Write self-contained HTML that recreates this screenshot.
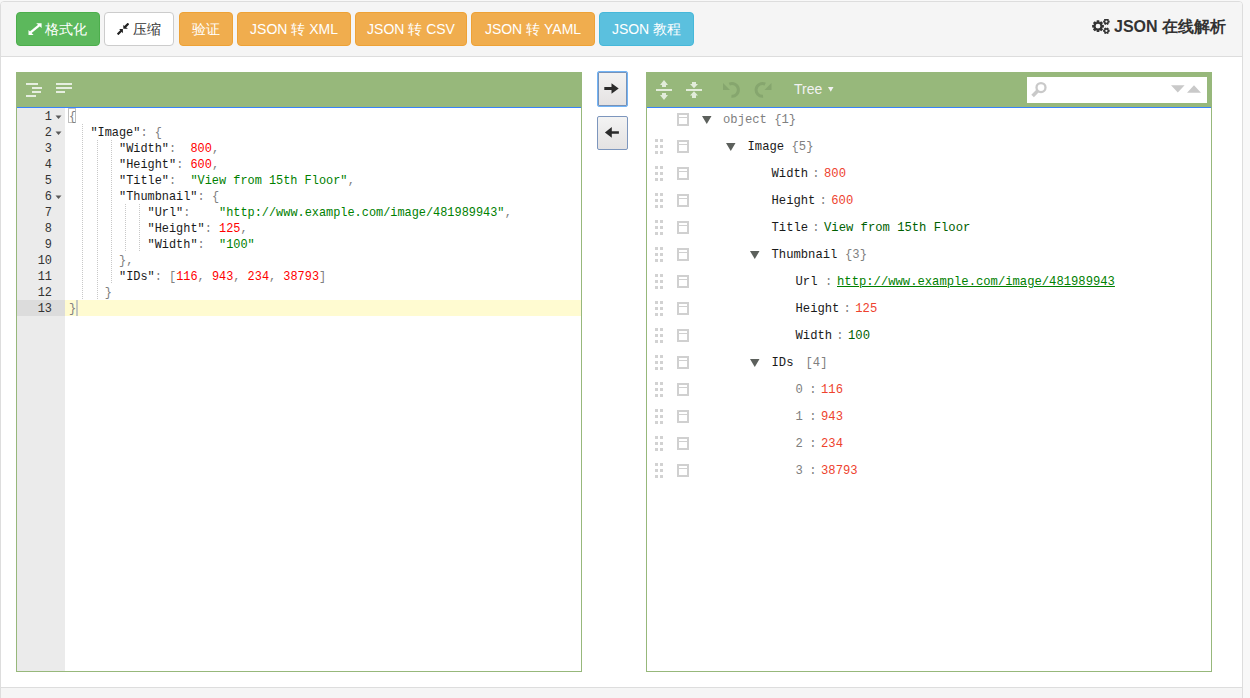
<!DOCTYPE html><html><head><meta charset="utf-8"><style>
*{box-sizing:border-box}
html,body{margin:0;padding:0}
body{width:1250px;height:698px;overflow:hidden;position:relative;background:#f8f8f8;font-family:"Liberation Sans",sans-serif;color:#333}
div,span,svg{position:absolute}
.panel{left:0;top:1px;width:1243px;height:760px;border:1px solid #ddd;border-radius:4px;background:#fff;overflow:hidden}
.ph{left:0;top:0;width:1241px;height:55px;background:#f5f5f5;border-bottom:1px solid #ddd}
.pf{left:0;top:685px;width:1241px;height:60px;background:#f5f5f5;border-top:1px solid #ddd}
.btn{top:12px;height:34px;border:1px solid;border-radius:4px;font-size:14px;line-height:32px;color:#fff;white-space:nowrap}
.btn span{position:static}
.g{background:#5cb85c;border-color:#4cae4c}
.d{background:#fff;border-color:#ccc;color:#333}
.o{background:#f0ad4e;border-color:#eea236}
.b{background:#5bc0de;border-color:#46b8da}
.t{white-space:pre}
.title{font-size:16px;font-weight:bold;color:#333;white-space:nowrap}
.ed{top:72px;height:600px;border:1px solid #97b87b;background:#fff}
.menu{left:0;top:0;width:564px;height:35px;background:#97b87b;border-bottom:1px solid #3883fa}
.gut{left:0;top:35px;width:48px;height:563px;background:#ebebeb}
.cm{font-family:"Liberation Mono",monospace;font-size:11.9px;white-space:pre;height:16px;line-height:16px;color:gray}
.ln{color:#333;text-align:right;width:40px}
.v{color:#1a1a1a}.s{color:green}.n{color:red}
.tm{font-family:"Liberation Mono",monospace;font-size:12.2px;white-space:pre;height:16px;line-height:16px}
.f{color:#1a1a1a}.ro{color:#808080}.sep{color:#808080}.num{color:#ee422e}.str{color:#006000}.url{color:green;text-decoration:underline}
</style></head><body>
<div class="panel"><div class="ph"></div><div class="pf"></div></div>
<div class="btn g" style="left:16px;width:84px;text-align:center;padding-left:16px">格式化</div>
<svg style="left:28px;top:23px" width="14" height="12" viewBox="0 0 14 12"><path d="M8.2 0.2 L13.6 0.2 L13.6 5 Z M0.5 7 L0.5 12 L5.6 12 Z" fill="#fff"/><path d="M2.6 9.4 L11.2 2.4" stroke="#fff" stroke-width="2.4"/></svg>
<div class="btn d" style="left:104px;width:70px;text-align:center;padding-left:16px">压缩</div>
<svg style="left:117px;top:23px" width="12" height="12" viewBox="0 0 12 12"><path d="M6.3 1.9 L6.3 5.8 L10.9 5.8 Z M2.2 6.1 L5.9 6.1 L5.9 10.2 Z" fill="#222"/><path d="M11.5 0.5 L7.6 4.4 M0.6 11.4 L4.5 7.5" stroke="#222" stroke-width="2.2"/></svg>
<div class="btn o" style="left:179px;width:54px;text-align:center;padding-left:0px">验证</div>
<div class="btn o" style="left:237px;width:114px;text-align:center;padding-left:0px">JSON 转 XML</div>
<div class="btn o" style="left:355px;width:112px;text-align:center;padding-left:0px">JSON 转 CSV</div>
<div class="btn o" style="left:471px;width:124px;text-align:center;padding-left:0px">JSON 转 YAML</div>
<div class="btn b" style="left:599px;width:95px;text-align:center;padding-left:0px">JSON 教程</div>
<div class="title" style="left:1114px;top:16px;line-height:22px">JSON 在线解析</div>
<div class="ed" style="left:16px;width:566px"><div class="menu"></div><div class="gut"></div></div>
<div class="ed" style="left:646px;width:566px"><div class="menu"></div></div>
<div style="left:65px;top:300px;width:516px;height:16px;background:#fffbd1"></div>
<div style="left:17px;top:300px;width:48px;height:16px;background:#dcdcdc"></div>
<div style="left:82px;top:124px;width:1px;height:16px;background:repeating-linear-gradient(#c8c8c8 0 1px,transparent 1px 2px)"></div>
<div style="left:82px;top:140px;width:1px;height:16px;background:repeating-linear-gradient(#c8c8c8 0 1px,transparent 1px 2px)"></div>
<div style="left:97px;top:140px;width:1px;height:16px;background:repeating-linear-gradient(#c8c8c8 0 1px,transparent 1px 2px)"></div>
<div style="left:111px;top:140px;width:1px;height:16px;background:repeating-linear-gradient(#c8c8c8 0 1px,transparent 1px 2px)"></div>
<div style="left:82px;top:156px;width:1px;height:16px;background:repeating-linear-gradient(#c8c8c8 0 1px,transparent 1px 2px)"></div>
<div style="left:97px;top:156px;width:1px;height:16px;background:repeating-linear-gradient(#c8c8c8 0 1px,transparent 1px 2px)"></div>
<div style="left:111px;top:156px;width:1px;height:16px;background:repeating-linear-gradient(#c8c8c8 0 1px,transparent 1px 2px)"></div>
<div style="left:82px;top:172px;width:1px;height:16px;background:repeating-linear-gradient(#c8c8c8 0 1px,transparent 1px 2px)"></div>
<div style="left:97px;top:172px;width:1px;height:16px;background:repeating-linear-gradient(#c8c8c8 0 1px,transparent 1px 2px)"></div>
<div style="left:111px;top:172px;width:1px;height:16px;background:repeating-linear-gradient(#c8c8c8 0 1px,transparent 1px 2px)"></div>
<div style="left:82px;top:188px;width:1px;height:16px;background:repeating-linear-gradient(#c8c8c8 0 1px,transparent 1px 2px)"></div>
<div style="left:97px;top:188px;width:1px;height:16px;background:repeating-linear-gradient(#c8c8c8 0 1px,transparent 1px 2px)"></div>
<div style="left:111px;top:188px;width:1px;height:16px;background:repeating-linear-gradient(#c8c8c8 0 1px,transparent 1px 2px)"></div>
<div style="left:82px;top:204px;width:1px;height:16px;background:repeating-linear-gradient(#c8c8c8 0 1px,transparent 1px 2px)"></div>
<div style="left:97px;top:204px;width:1px;height:16px;background:repeating-linear-gradient(#c8c8c8 0 1px,transparent 1px 2px)"></div>
<div style="left:111px;top:204px;width:1px;height:16px;background:repeating-linear-gradient(#c8c8c8 0 1px,transparent 1px 2px)"></div>
<div style="left:125px;top:204px;width:1px;height:16px;background:repeating-linear-gradient(#c8c8c8 0 1px,transparent 1px 2px)"></div>
<div style="left:139px;top:204px;width:1px;height:16px;background:repeating-linear-gradient(#c8c8c8 0 1px,transparent 1px 2px)"></div>
<div style="left:82px;top:220px;width:1px;height:16px;background:repeating-linear-gradient(#c8c8c8 0 1px,transparent 1px 2px)"></div>
<div style="left:97px;top:220px;width:1px;height:16px;background:repeating-linear-gradient(#c8c8c8 0 1px,transparent 1px 2px)"></div>
<div style="left:111px;top:220px;width:1px;height:16px;background:repeating-linear-gradient(#c8c8c8 0 1px,transparent 1px 2px)"></div>
<div style="left:125px;top:220px;width:1px;height:16px;background:repeating-linear-gradient(#c8c8c8 0 1px,transparent 1px 2px)"></div>
<div style="left:139px;top:220px;width:1px;height:16px;background:repeating-linear-gradient(#c8c8c8 0 1px,transparent 1px 2px)"></div>
<div style="left:82px;top:236px;width:1px;height:16px;background:repeating-linear-gradient(#c8c8c8 0 1px,transparent 1px 2px)"></div>
<div style="left:97px;top:236px;width:1px;height:16px;background:repeating-linear-gradient(#c8c8c8 0 1px,transparent 1px 2px)"></div>
<div style="left:111px;top:236px;width:1px;height:16px;background:repeating-linear-gradient(#c8c8c8 0 1px,transparent 1px 2px)"></div>
<div style="left:125px;top:236px;width:1px;height:16px;background:repeating-linear-gradient(#c8c8c8 0 1px,transparent 1px 2px)"></div>
<div style="left:139px;top:236px;width:1px;height:16px;background:repeating-linear-gradient(#c8c8c8 0 1px,transparent 1px 2px)"></div>
<div style="left:82px;top:252px;width:1px;height:16px;background:repeating-linear-gradient(#c8c8c8 0 1px,transparent 1px 2px)"></div>
<div style="left:97px;top:252px;width:1px;height:16px;background:repeating-linear-gradient(#c8c8c8 0 1px,transparent 1px 2px)"></div>
<div style="left:111px;top:252px;width:1px;height:16px;background:repeating-linear-gradient(#c8c8c8 0 1px,transparent 1px 2px)"></div>
<div style="left:82px;top:268px;width:1px;height:16px;background:repeating-linear-gradient(#c8c8c8 0 1px,transparent 1px 2px)"></div>
<div style="left:97px;top:268px;width:1px;height:16px;background:repeating-linear-gradient(#c8c8c8 0 1px,transparent 1px 2px)"></div>
<div style="left:111px;top:268px;width:1px;height:16px;background:repeating-linear-gradient(#c8c8c8 0 1px,transparent 1px 2px)"></div>
<div style="left:82px;top:284px;width:1px;height:16px;background:repeating-linear-gradient(#c8c8c8 0 1px,transparent 1px 2px)"></div>
<div style="left:97px;top:284px;width:1px;height:16px;background:repeating-linear-gradient(#c8c8c8 0 1px,transparent 1px 2px)"></div>
<div style="left:68px;top:108px;width:8px;height:15px;border:1px solid #bfbfbf"></div>
<div style="left:76px;top:300px;width:2px;height:16px;background:#c3c8c3"></div>
<div class="cm ln" style="left:12px;top:109px">1</div>
<div class="cm " style="left:69.00px;top:109px">{</div>
<div class="cm ln" style="left:12px;top:125px">2</div>
<div class="cm v" style="left:90.44px;top:125px">&quot;Image&quot;</div>
<div class="cm " style="left:140.45px;top:125px">: {</div>
<div class="cm ln" style="left:12px;top:141px">3</div>
<div class="cm v" style="left:119.02px;top:141px">&quot;Width&quot;</div>
<div class="cm " style="left:169.03px;top:141px">:  </div>
<div class="cm n" style="left:190.46px;top:141px">800</div>
<div class="cm " style="left:211.90px;top:141px">,</div>
<div class="cm ln" style="left:12px;top:157px">4</div>
<div class="cm v" style="left:119.02px;top:157px">&quot;Height&quot;</div>
<div class="cm " style="left:176.18px;top:157px">: </div>
<div class="cm n" style="left:190.46px;top:157px">600</div>
<div class="cm " style="left:211.90px;top:157px">,</div>
<div class="cm ln" style="left:12px;top:173px">5</div>
<div class="cm v" style="left:119.02px;top:173px">&quot;Title&quot;</div>
<div class="cm " style="left:169.03px;top:173px">:  </div>
<div class="cm s" style="left:190.46px;top:173px">&quot;View from 15th Floor&quot;</div>
<div class="cm " style="left:347.65px;top:173px">,</div>
<div class="cm ln" style="left:12px;top:189px">6</div>
<div class="cm v" style="left:119.02px;top:189px">&quot;Thumbnail&quot;</div>
<div class="cm " style="left:197.61px;top:189px">: {</div>
<div class="cm ln" style="left:12px;top:205px">7</div>
<div class="cm v" style="left:147.59px;top:205px">&quot;Url&quot;</div>
<div class="cm " style="left:183.32px;top:205px">:    </div>
<div class="cm s" style="left:219.04px;top:205px">&quot;http://www.example.com/image/481989943&quot;</div>
<div class="cm " style="left:504.84px;top:205px">,</div>
<div class="cm ln" style="left:12px;top:221px">8</div>
<div class="cm v" style="left:147.59px;top:221px">&quot;Height&quot;</div>
<div class="cm " style="left:204.75px;top:221px">: </div>
<div class="cm n" style="left:219.04px;top:221px">125</div>
<div class="cm " style="left:240.48px;top:221px">,</div>
<div class="cm ln" style="left:12px;top:237px">9</div>
<div class="cm v" style="left:147.59px;top:237px">&quot;Width&quot;</div>
<div class="cm " style="left:197.61px;top:237px">:  </div>
<div class="cm s" style="left:219.04px;top:237px">&quot;100&quot;</div>
<div class="cm ln" style="left:12px;top:253px">10</div>
<div class="cm " style="left:119.02px;top:253px">},</div>
<div class="cm ln" style="left:12px;top:269px">11</div>
<div class="cm v" style="left:119.02px;top:269px">&quot;IDs&quot;</div>
<div class="cm " style="left:154.74px;top:269px">: [</div>
<div class="cm n" style="left:176.18px;top:269px">116</div>
<div class="cm " style="left:197.61px;top:269px">, </div>
<div class="cm n" style="left:211.90px;top:269px">943</div>
<div class="cm " style="left:233.33px;top:269px">, </div>
<div class="cm n" style="left:247.62px;top:269px">234</div>
<div class="cm " style="left:269.06px;top:269px">, </div>
<div class="cm n" style="left:283.35px;top:269px">38793</div>
<div class="cm " style="left:319.07px;top:269px">]</div>
<div class="cm ln" style="left:12px;top:285px">12</div>
<div class="cm " style="left:104.72px;top:285px">}</div>
<div class="cm ln" style="left:12px;top:301px">13</div>
<div class="cm " style="left:69.00px;top:301px">}</div>
<svg style="left:55px;top:115px" width="7" height="5"><path d="M0.5 0.5 L6.5 0.5 L3.5 4 Z" fill="#5a5a5a"/></svg>
<svg style="left:55px;top:131px" width="7" height="5"><path d="M0.5 0.5 L6.5 0.5 L3.5 4 Z" fill="#5a5a5a"/></svg>
<svg style="left:55px;top:195px" width="7" height="5"><path d="M0.5 0.5 L6.5 0.5 L3.5 4 Z" fill="#5a5a5a"/></svg>
<div style="left:26px;top:83px;width:12px;height:2px;background:#e6eee0"></div>
<div style="left:32px;top:87px;width:10px;height:2px;background:#e6eee0"></div>
<div style="left:32px;top:91px;width:9px;height:2px;background:#e6eee0"></div>
<div style="left:26px;top:95px;width:10px;height:2px;background:#e6eee0"></div>
<div style="left:56px;top:83px;width:16px;height:2px;background:#e6eee0"></div>
<div style="left:56px;top:87px;width:16px;height:2px;background:#e6eee0"></div>
<div style="left:56px;top:91px;width:9px;height:2px;background:#e6eee0"></div>
<div style="left:677px;top:113px;width:12px;height:13px;border:2px solid #d0d0d0"></div>
<div style="left:679px;top:117px;width:8px;height:1px;background:#d0d0d0"></div>
<div style="left:677px;top:140px;width:12px;height:13px;border:2px solid #d0d0d0"></div>
<div style="left:679px;top:144px;width:8px;height:1px;background:#d0d0d0"></div>
<div style="left:655px;top:139px;width:3px;height:3px;background:#d2d2d2"></div>
<div style="left:660px;top:139px;width:3px;height:3px;background:#d2d2d2"></div>
<div style="left:655px;top:145px;width:3px;height:3px;background:#d2d2d2"></div>
<div style="left:660px;top:145px;width:3px;height:3px;background:#d2d2d2"></div>
<div style="left:655px;top:151px;width:3px;height:3px;background:#d2d2d2"></div>
<div style="left:660px;top:151px;width:3px;height:3px;background:#d2d2d2"></div>
<div style="left:677px;top:167px;width:12px;height:13px;border:2px solid #d0d0d0"></div>
<div style="left:679px;top:171px;width:8px;height:1px;background:#d0d0d0"></div>
<div style="left:655px;top:166px;width:3px;height:3px;background:#d2d2d2"></div>
<div style="left:660px;top:166px;width:3px;height:3px;background:#d2d2d2"></div>
<div style="left:655px;top:172px;width:3px;height:3px;background:#d2d2d2"></div>
<div style="left:660px;top:172px;width:3px;height:3px;background:#d2d2d2"></div>
<div style="left:655px;top:178px;width:3px;height:3px;background:#d2d2d2"></div>
<div style="left:660px;top:178px;width:3px;height:3px;background:#d2d2d2"></div>
<div style="left:677px;top:194px;width:12px;height:13px;border:2px solid #d0d0d0"></div>
<div style="left:679px;top:198px;width:8px;height:1px;background:#d0d0d0"></div>
<div style="left:655px;top:193px;width:3px;height:3px;background:#d2d2d2"></div>
<div style="left:660px;top:193px;width:3px;height:3px;background:#d2d2d2"></div>
<div style="left:655px;top:199px;width:3px;height:3px;background:#d2d2d2"></div>
<div style="left:660px;top:199px;width:3px;height:3px;background:#d2d2d2"></div>
<div style="left:655px;top:205px;width:3px;height:3px;background:#d2d2d2"></div>
<div style="left:660px;top:205px;width:3px;height:3px;background:#d2d2d2"></div>
<div style="left:677px;top:221px;width:12px;height:13px;border:2px solid #d0d0d0"></div>
<div style="left:679px;top:225px;width:8px;height:1px;background:#d0d0d0"></div>
<div style="left:655px;top:220px;width:3px;height:3px;background:#d2d2d2"></div>
<div style="left:660px;top:220px;width:3px;height:3px;background:#d2d2d2"></div>
<div style="left:655px;top:226px;width:3px;height:3px;background:#d2d2d2"></div>
<div style="left:660px;top:226px;width:3px;height:3px;background:#d2d2d2"></div>
<div style="left:655px;top:232px;width:3px;height:3px;background:#d2d2d2"></div>
<div style="left:660px;top:232px;width:3px;height:3px;background:#d2d2d2"></div>
<div style="left:677px;top:248px;width:12px;height:13px;border:2px solid #d0d0d0"></div>
<div style="left:679px;top:252px;width:8px;height:1px;background:#d0d0d0"></div>
<div style="left:655px;top:247px;width:3px;height:3px;background:#d2d2d2"></div>
<div style="left:660px;top:247px;width:3px;height:3px;background:#d2d2d2"></div>
<div style="left:655px;top:253px;width:3px;height:3px;background:#d2d2d2"></div>
<div style="left:660px;top:253px;width:3px;height:3px;background:#d2d2d2"></div>
<div style="left:655px;top:259px;width:3px;height:3px;background:#d2d2d2"></div>
<div style="left:660px;top:259px;width:3px;height:3px;background:#d2d2d2"></div>
<div style="left:677px;top:275px;width:12px;height:13px;border:2px solid #d0d0d0"></div>
<div style="left:679px;top:279px;width:8px;height:1px;background:#d0d0d0"></div>
<div style="left:655px;top:274px;width:3px;height:3px;background:#d2d2d2"></div>
<div style="left:660px;top:274px;width:3px;height:3px;background:#d2d2d2"></div>
<div style="left:655px;top:280px;width:3px;height:3px;background:#d2d2d2"></div>
<div style="left:660px;top:280px;width:3px;height:3px;background:#d2d2d2"></div>
<div style="left:655px;top:286px;width:3px;height:3px;background:#d2d2d2"></div>
<div style="left:660px;top:286px;width:3px;height:3px;background:#d2d2d2"></div>
<div style="left:677px;top:302px;width:12px;height:13px;border:2px solid #d0d0d0"></div>
<div style="left:679px;top:306px;width:8px;height:1px;background:#d0d0d0"></div>
<div style="left:655px;top:301px;width:3px;height:3px;background:#d2d2d2"></div>
<div style="left:660px;top:301px;width:3px;height:3px;background:#d2d2d2"></div>
<div style="left:655px;top:307px;width:3px;height:3px;background:#d2d2d2"></div>
<div style="left:660px;top:307px;width:3px;height:3px;background:#d2d2d2"></div>
<div style="left:655px;top:313px;width:3px;height:3px;background:#d2d2d2"></div>
<div style="left:660px;top:313px;width:3px;height:3px;background:#d2d2d2"></div>
<div style="left:677px;top:329px;width:12px;height:13px;border:2px solid #d0d0d0"></div>
<div style="left:679px;top:333px;width:8px;height:1px;background:#d0d0d0"></div>
<div style="left:655px;top:328px;width:3px;height:3px;background:#d2d2d2"></div>
<div style="left:660px;top:328px;width:3px;height:3px;background:#d2d2d2"></div>
<div style="left:655px;top:334px;width:3px;height:3px;background:#d2d2d2"></div>
<div style="left:660px;top:334px;width:3px;height:3px;background:#d2d2d2"></div>
<div style="left:655px;top:340px;width:3px;height:3px;background:#d2d2d2"></div>
<div style="left:660px;top:340px;width:3px;height:3px;background:#d2d2d2"></div>
<div style="left:677px;top:356px;width:12px;height:13px;border:2px solid #d0d0d0"></div>
<div style="left:679px;top:360px;width:8px;height:1px;background:#d0d0d0"></div>
<div style="left:655px;top:355px;width:3px;height:3px;background:#d2d2d2"></div>
<div style="left:660px;top:355px;width:3px;height:3px;background:#d2d2d2"></div>
<div style="left:655px;top:361px;width:3px;height:3px;background:#d2d2d2"></div>
<div style="left:660px;top:361px;width:3px;height:3px;background:#d2d2d2"></div>
<div style="left:655px;top:367px;width:3px;height:3px;background:#d2d2d2"></div>
<div style="left:660px;top:367px;width:3px;height:3px;background:#d2d2d2"></div>
<div style="left:677px;top:383px;width:12px;height:13px;border:2px solid #d0d0d0"></div>
<div style="left:679px;top:387px;width:8px;height:1px;background:#d0d0d0"></div>
<div style="left:655px;top:382px;width:3px;height:3px;background:#d2d2d2"></div>
<div style="left:660px;top:382px;width:3px;height:3px;background:#d2d2d2"></div>
<div style="left:655px;top:388px;width:3px;height:3px;background:#d2d2d2"></div>
<div style="left:660px;top:388px;width:3px;height:3px;background:#d2d2d2"></div>
<div style="left:655px;top:394px;width:3px;height:3px;background:#d2d2d2"></div>
<div style="left:660px;top:394px;width:3px;height:3px;background:#d2d2d2"></div>
<div style="left:677px;top:410px;width:12px;height:13px;border:2px solid #d0d0d0"></div>
<div style="left:679px;top:414px;width:8px;height:1px;background:#d0d0d0"></div>
<div style="left:655px;top:409px;width:3px;height:3px;background:#d2d2d2"></div>
<div style="left:660px;top:409px;width:3px;height:3px;background:#d2d2d2"></div>
<div style="left:655px;top:415px;width:3px;height:3px;background:#d2d2d2"></div>
<div style="left:660px;top:415px;width:3px;height:3px;background:#d2d2d2"></div>
<div style="left:655px;top:421px;width:3px;height:3px;background:#d2d2d2"></div>
<div style="left:660px;top:421px;width:3px;height:3px;background:#d2d2d2"></div>
<div style="left:677px;top:437px;width:12px;height:13px;border:2px solid #d0d0d0"></div>
<div style="left:679px;top:441px;width:8px;height:1px;background:#d0d0d0"></div>
<div style="left:655px;top:436px;width:3px;height:3px;background:#d2d2d2"></div>
<div style="left:660px;top:436px;width:3px;height:3px;background:#d2d2d2"></div>
<div style="left:655px;top:442px;width:3px;height:3px;background:#d2d2d2"></div>
<div style="left:660px;top:442px;width:3px;height:3px;background:#d2d2d2"></div>
<div style="left:655px;top:448px;width:3px;height:3px;background:#d2d2d2"></div>
<div style="left:660px;top:448px;width:3px;height:3px;background:#d2d2d2"></div>
<div style="left:677px;top:464px;width:12px;height:13px;border:2px solid #d0d0d0"></div>
<div style="left:679px;top:468px;width:8px;height:1px;background:#d0d0d0"></div>
<div style="left:655px;top:463px;width:3px;height:3px;background:#d2d2d2"></div>
<div style="left:660px;top:463px;width:3px;height:3px;background:#d2d2d2"></div>
<div style="left:655px;top:469px;width:3px;height:3px;background:#d2d2d2"></div>
<div style="left:660px;top:469px;width:3px;height:3px;background:#d2d2d2"></div>
<div style="left:655px;top:475px;width:3px;height:3px;background:#d2d2d2"></div>
<div style="left:660px;top:475px;width:3px;height:3px;background:#d2d2d2"></div>
<svg style="left:702px;top:116px" width="10" height="8"><path d="M0 0 L9.5 0 L4.75 8 Z" fill="#5c605c"/></svg>
<svg style="left:726px;top:143px" width="10" height="8"><path d="M0 0 L9.5 0 L4.75 8 Z" fill="#5c605c"/></svg>
<svg style="left:750px;top:251px" width="10" height="8"><path d="M0 0 L9.5 0 L4.75 8 Z" fill="#5c605c"/></svg>
<svg style="left:750px;top:359px" width="10" height="8"><path d="M0 0 L9.5 0 L4.75 8 Z" fill="#5c605c"/></svg>
<div class="tm ro" style="left:723px;top:112px">object {1}</div>
<div class="tm f" style="left:747.5px;top:139px">Image</div>
<div class="tm ro" style="left:791.5px;top:139px">{5}</div>
<div class="tm f" style="left:771.5px;top:166px">Width</div>
<div class="tm sep" style="left:812.3px;top:166px">:</div>
<div class="tm num" style="left:824px;top:166px">800</div>
<div class="tm f" style="left:771.5px;top:193px">Height</div>
<div class="tm sep" style="left:819.5px;top:193px">:</div>
<div class="tm num" style="left:831.3px;top:193px">600</div>
<div class="tm f" style="left:771.5px;top:220px">Title</div>
<div class="tm sep" style="left:812.3px;top:220px">:</div>
<div class="tm str" style="left:824px;top:220px">View from 15th Floor</div>
<div class="tm f" style="left:771.5px;top:247px">Thumbnail</div>
<div class="tm ro" style="left:845px;top:247px">{3}</div>
<div class="tm f" style="left:795.5px;top:274px">Url</div>
<div class="tm sep" style="left:825px;top:274px">:</div>
<div class="tm url" style="left:837px;top:274px">http://www.example.com/image/481989943</div>
<div class="tm f" style="left:795.5px;top:301px">Height</div>
<div class="tm sep" style="left:843.5px;top:301px">:</div>
<div class="tm num" style="left:855.3px;top:301px">125</div>
<div class="tm f" style="left:795.5px;top:328px">Width</div>
<div class="tm sep" style="left:836.3px;top:328px">:</div>
<div class="tm str" style="left:848px;top:328px">100</div>
<div class="tm f" style="left:771.5px;top:355px">IDs</div>
<div class="tm ro" style="left:805.5px;top:355px">[4]</div>
<div class="tm ro" style="left:795.5px;top:382px">0</div>
<div class="tm sep" style="left:809.3px;top:382px">:</div>
<div class="tm num" style="left:821px;top:382px">116</div>
<div class="tm ro" style="left:795.5px;top:409px">1</div>
<div class="tm sep" style="left:809.3px;top:409px">:</div>
<div class="tm num" style="left:821px;top:409px">943</div>
<div class="tm ro" style="left:795.5px;top:436px">2</div>
<div class="tm sep" style="left:809.3px;top:436px">:</div>
<div class="tm num" style="left:821px;top:436px">234</div>
<div class="tm ro" style="left:795.5px;top:463px">3</div>
<div class="tm sep" style="left:809.3px;top:463px">:</div>
<div class="tm num" style="left:821px;top:463px">38793</div>
<svg style="left:1092px;top:19px" width="19" height="16" viewBox="0 0 19 16"><path d="M10.13 5.68 L11.87 5.94 L11.87 8.46 L10.13 8.72 L10.07 8.88 L10.00 9.04 L11.04 10.45 L9.25 12.24 L7.84 11.20 L7.68 11.27 L7.52 11.33 L7.26 13.07 L4.74 13.07 L4.48 11.33 L4.32 11.27 L4.16 11.20 L2.75 12.24 L0.96 10.45 L2.00 9.04 L1.93 8.88 L1.87 8.72 L0.13 8.46 L0.13 5.94 L1.87 5.68 L1.93 5.52 L2.00 5.36 L0.96 3.95 L2.75 2.16 L4.16 3.20 L4.32 3.13 L4.48 3.07 L4.74 1.33 L7.26 1.33 L7.52 3.07 L7.68 3.13 L7.84 3.20 L9.25 2.16 L11.04 3.95 L10.00 5.36 L10.07 5.52 Z M8.40 7.20 A2.4 2.4 0 1 0 3.60 7.20 A2.4 2.4 0 1 0 8.40 7.20 Z" fill="#333" fill-rule="evenodd"/><path d="M16.63 1.47 L17.66 1.65 L17.66 3.55 L16.63 3.73 L16.57 3.85 L16.50 3.96 L16.85 4.95 L15.21 5.90 L14.53 5.10 L14.40 5.10 L14.27 5.10 L13.59 5.90 L11.95 4.95 L12.30 3.96 L12.23 3.85 L12.17 3.73 L11.14 3.55 L11.14 1.65 L12.17 1.47 L12.23 1.35 L12.30 1.24 L11.95 0.25 L13.59 -0.70 L14.27 0.10 L14.40 0.10 L14.53 0.10 L15.21 -0.70 L16.85 0.25 L16.50 1.24 L16.57 1.35 Z M15.50 2.60 A1.1 1.1 0 1 0 13.30 2.60 A1.1 1.1 0 1 0 15.50 2.60 Z" fill="#333" fill-rule="evenodd"/><path d="M16.63 10.67 L17.66 10.85 L17.66 12.75 L16.63 12.93 L16.57 13.05 L16.50 13.16 L16.85 14.15 L15.21 15.10 L14.53 14.30 L14.40 14.30 L14.27 14.30 L13.59 15.10 L11.95 14.15 L12.30 13.16 L12.23 13.05 L12.17 12.93 L11.14 12.75 L11.14 10.85 L12.17 10.67 L12.23 10.55 L12.30 10.44 L11.95 9.45 L13.59 8.50 L14.27 9.30 L14.40 9.30 L14.53 9.30 L15.21 8.50 L16.85 9.45 L16.50 10.44 L16.57 10.55 Z M15.50 11.80 A1.1 1.1 0 1 0 13.30 11.80 A1.1 1.1 0 1 0 15.50 11.80 Z" fill="#333" fill-rule="evenodd"/></svg>
<div style="left:597px;top:71px;width:31px;height:36px;border:1px solid #72b4f6;border-radius:2px;box-shadow:inset 0 0 0 1px #7792b8;background:linear-gradient(#f3f3f3,#e4e2e2)"></div>
<svg style="left:604px;top:83px" width="15" height="11" viewBox="0 0 15 11"><path d="M0.3 4 H7.5 V0.2 L14.7 5.5 L7.5 10.8 V7 H0.3 Z" fill="#2b2b2b"/></svg>
<div style="left:597px;top:116px;width:31px;height:34px;border:1px solid #7d96bd;border-radius:2px;background:linear-gradient(#f3f3f3,#e4e2e2)"></div>
<svg style="left:604px;top:127px" width="15" height="11" viewBox="0 0 15 11"><path d="M14.9 4.2 H7.8 V0 L0.9 5.4 L7.8 10.8 V6.8 H14.9 Z" fill="#2b2b2b"/></svg>
<svg style="left:656px;top:79px" width="17" height="22" viewBox="0 0 17 22"><rect x="0" y="10" width="16" height="2" fill="#e2ecda"/><path d="M8 1 L12 6 L10 6 L10 8 L6 8 L6 6 L4 6 Z M6 14 L10 14 L10 16 L12 16 L8 21 L4 16 L6 16 Z" fill="#e2ecda"/></svg>
<svg style="left:686px;top:79px" width="17" height="22" viewBox="0 0 17 22"><rect x="0" y="10" width="16" height="2" fill="#e2ecda"/><path d="M6 3 L10 3 L10 5 L12 5 L8 9.3 L4 5 L6 5 Z M8 12.3 L12 16.6 L10 16.6 L10 19 L6 19 L6 16.6 L4 16.6 Z" fill="#e2ecda"/></svg>
<svg style="left:720px;top:80px" width="23" height="20" viewBox="0 0 23 20"><path d="M9.3 4.15 A6.35 6.35 0 1 1 11.45 16.2" fill="none" stroke="#86a66e" stroke-width="3"/><path d="M3 3 L3 10 L10 10 Z" fill="#86a66e"/></svg>
<svg style="left:752px;top:80px" width="23" height="20" viewBox="0 0 23 20"><path d="M13.2 4.15 A6.35 6.35 0 1 0 11.05 16.2" fill="none" stroke="#86a66e" stroke-width="3"/><path d="M19.5 3 L19.5 10 L12.5 10 Z" fill="#86a66e"/></svg>
<div style="left:794px;top:81px;font-size:14px;line-height:16px;color:#f2f2f2;white-space:pre">Tree</div>
<svg style="left:828px;top:87px" width="6" height="5" viewBox="0 0 6 5"><path d="M0 0 H5.5 L2.75 4.8 Z" fill="#f2f2f2"/></svg>
<div style="left:1027px;top:77px;width:180px;height:26px;background:#fff"></div>
<svg style="left:1030px;top:80px" width="20" height="19" viewBox="0 0 20 19"><circle cx="11" cy="7.6" r="4.5" fill="none" stroke="#c9c9c9" stroke-width="2.3"/><path d="M7.8 10.8 L2.6 16" stroke="#c9c9c9" stroke-width="3.6"/></svg>
<svg style="left:1171px;top:85px" width="31" height="8" viewBox="0 0 31 8"><path d="M0 0.3 H13.6 L6.8 7.6 Z M16 7.7 H30 L23 0.2 Z" fill="#c9c9c9"/></svg>
</body></html>
